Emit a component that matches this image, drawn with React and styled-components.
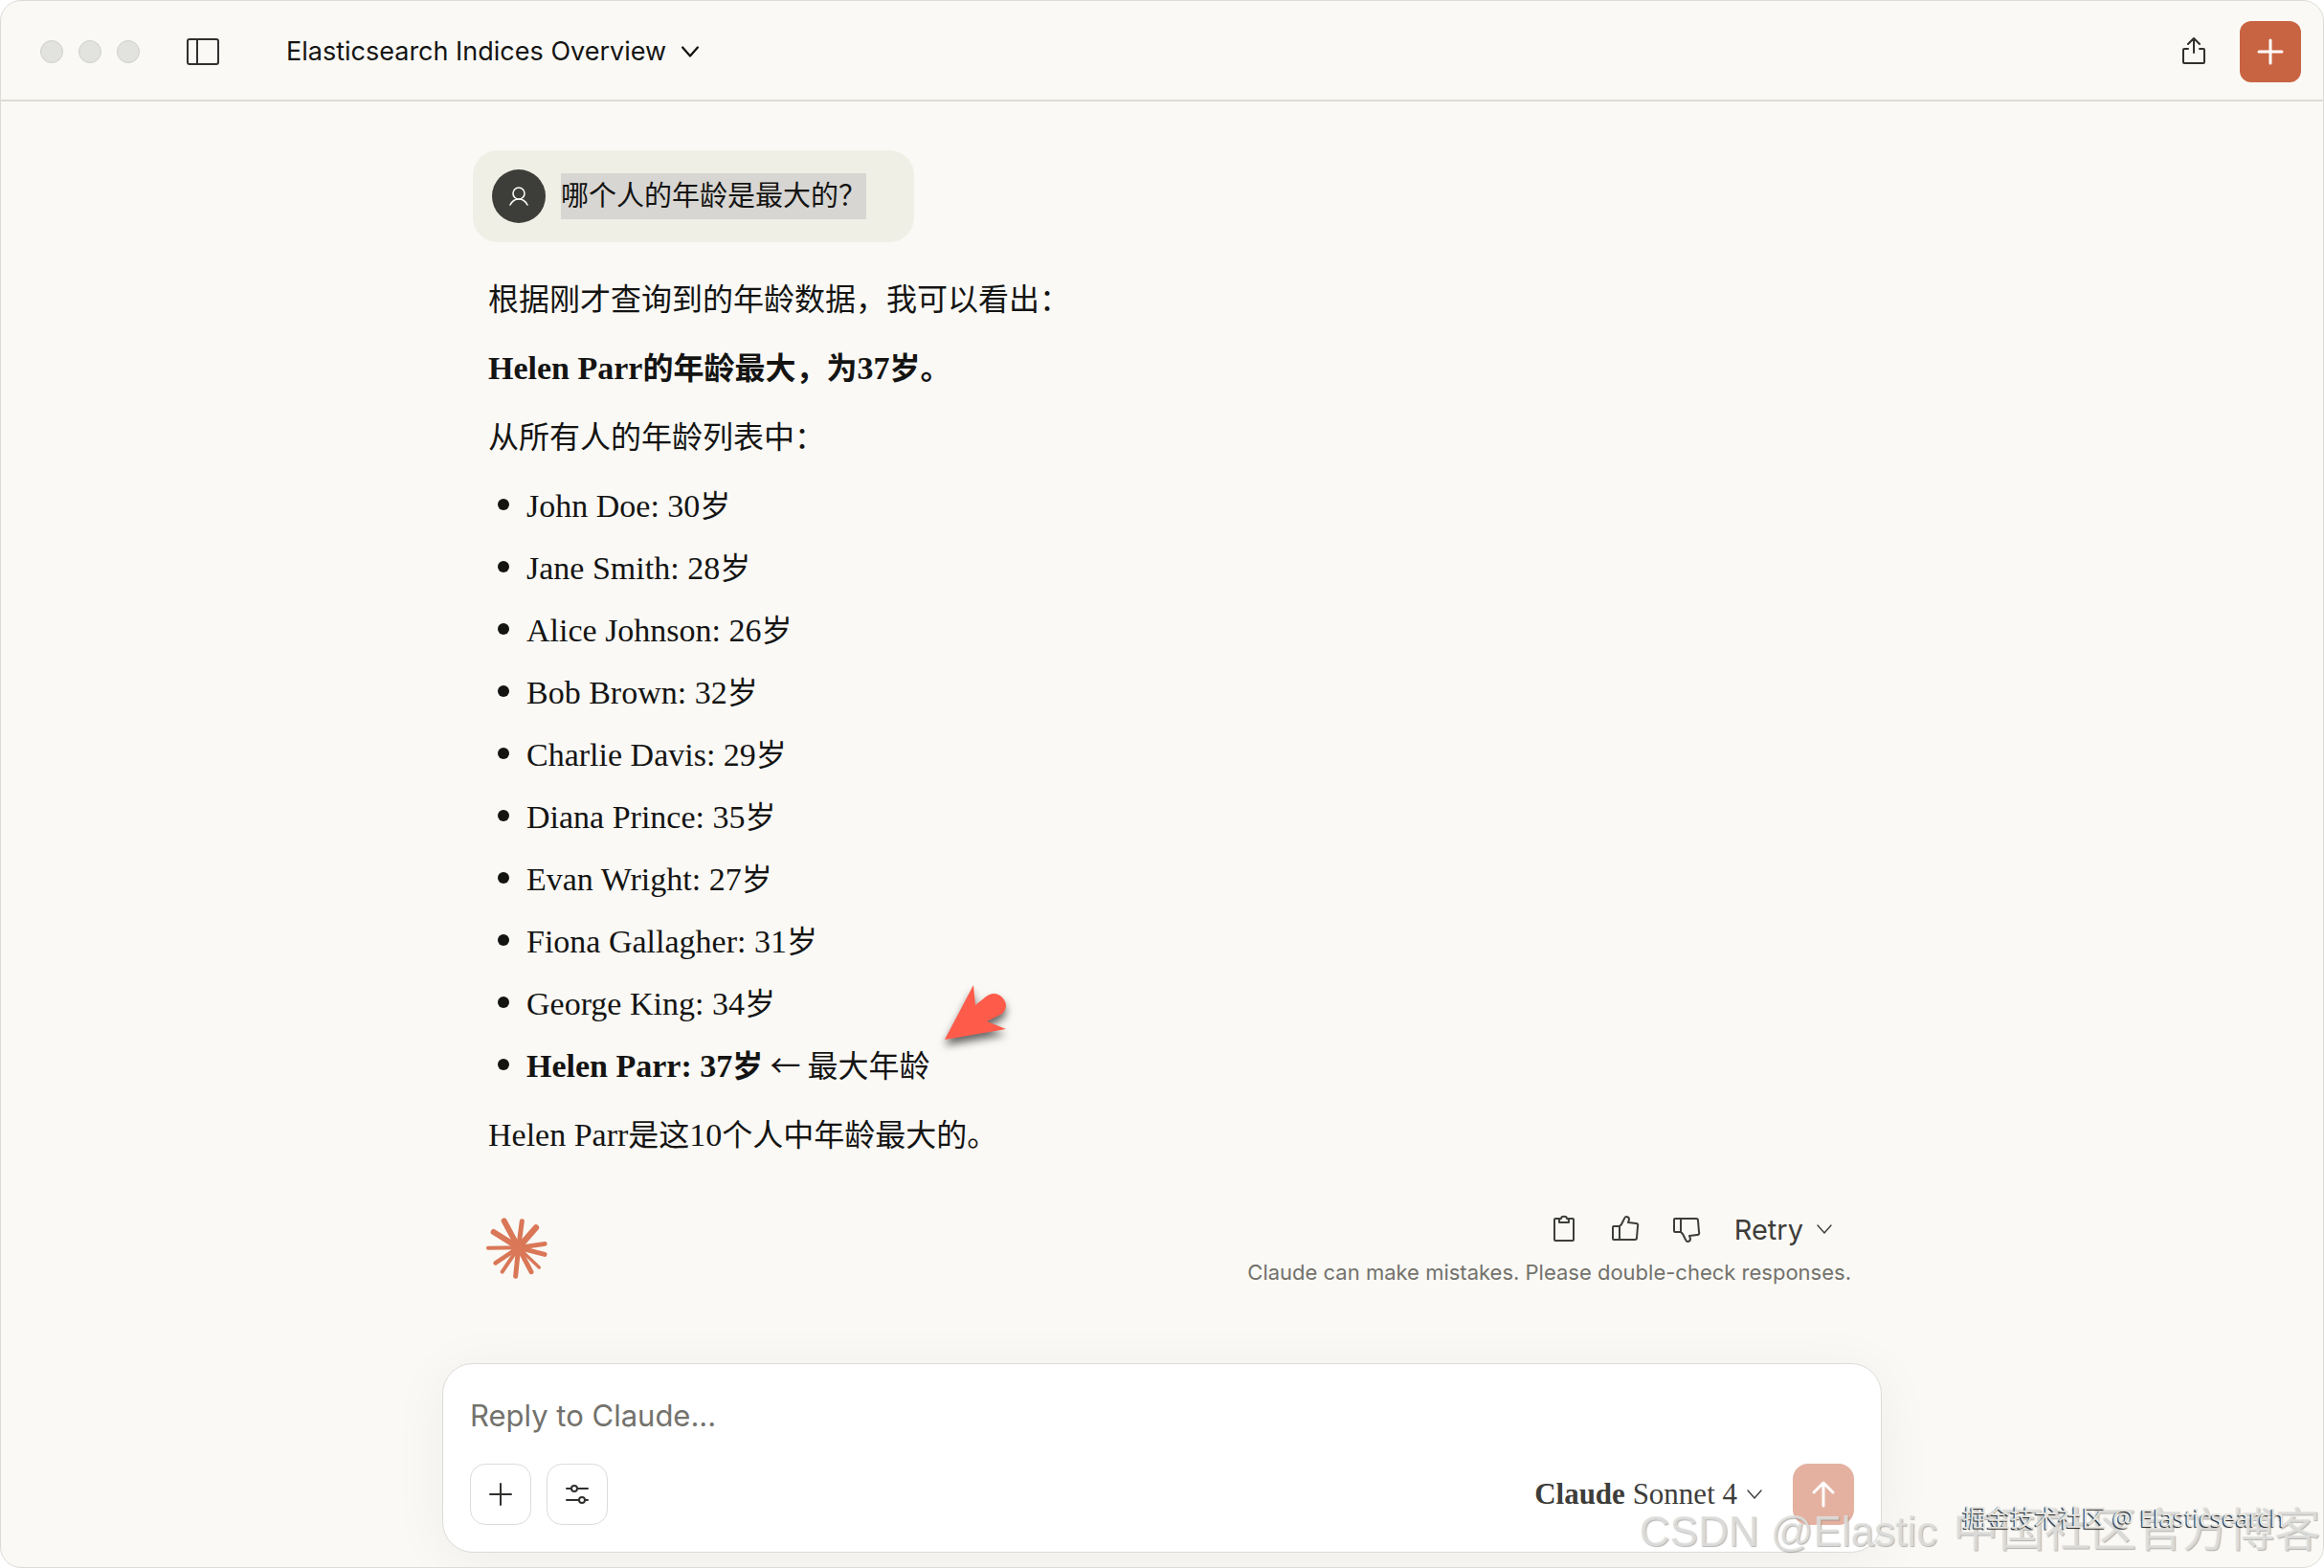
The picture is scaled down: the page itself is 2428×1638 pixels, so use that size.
import React, { useState } from "react";
import { createGlobalStyle, styled } from "styled-components";

const people = [
  { name: "John Doe", age: 30 },
  { name: "Jane Smith", age: 28 },
  { name: "Alice Johnson", age: 26 },
  { name: "Bob Brown", age: 32 },
  { name: "Charlie Davis", age: 29 },
  { name: "Diana Prince", age: 35 },
  { name: "Evan Wright", age: 27 },
  { name: "Fiona Gallagher", age: 31 },
  { name: "George King", age: 34 },
];

// tip x, tip y, thickness
const rays = [
  [80, 40, 18],
  [136, 41, 15],
  [180, 61, 19],
  [208, 112, 14],
  [207, 145, 15],
  [190, 186, 10],
  [165, 200, 15],
  [116, 214, 15],
  [74, 200, 12],
  [53, 172, 14],
  [30, 125, 12],
  [47, 75, 18],
];

function Caret({ size = 16, weight = 2 }) {
  return (
    <Icon viewBox="0 0 16 16" $w={size} $h={size} $weight={weight}>
      <path d="M1 4l7 8 7-8" />
    </Icon>
  );
}

function Burst() {
  return (
    <BurstIcon viewBox="24 30 192 192">
      {rays.map(([x, y, w]) => (
        <path key={`${x}-${y}`} d={`M125 124L${x} ${y}`} strokeWidth={w} />
      ))}
      <circle cx="126" cy="126" r="24" />
    </BurstIcon>
  );
}

function ThumbIcon({ down }) {
  return (
    <Icon viewBox="0 0 32 32" $w={32} $h={32}>
      <g transform={down ? "matrix(1 0 0 -1 0 32)" : undefined}>
        <path d="M10 13H4a1 1 0 0 0-1 1v12a1 1 0 0 0 1 1h22a2 2 0 0 0 2-2l1-12a2 2 0 0 0-2-3l-8-1 1-3c0-2-1-3-3-3-1 0-1 0-2 2l-3 6-2 2v14" />
      </g>
    </Icon>
  );
}

function Header() {
  return (
    <Toolbar>
      <Lights>
        <Light aria-label="Close" />
        <Light aria-label="Minimize" />
        <Light aria-label="Zoom" />
      </Lights>
      <PlainButton aria-label="Toggle sidebar">
        <Icon viewBox="0 0 34 28" $w={34} $h={28}>
          <rect x="1" y="1" width="32" height="26" rx="2" />
          <path d="M11 1v26" />
        </Icon>
      </PlainButton>
      <TitleButton>
        Elasticsearch Indices Overview
        <Caret size={18} />
      </TitleButton>
      <Spacer />
      <PlainButton aria-label="Share">
        <Icon viewBox="0 0 32 32" $w={32} $h={32}>
          <path d="M10 13H6a1 1 0 0 0-1 1v13a1 1 0 0 0 1 1h20a1 1 0 0 0 1-1V14a1 1 0 0 0-1-1h-4M16 17V2M10 8l6-6 6 6" />
        </Icon>
      </PlainButton>
      <NewChat aria-label="New chat">
        <Icon viewBox="0 0 28 28" $w={28} $h={28} $weight={3}>
          <path d="M14 2v24M2 14h24" />
        </Icon>
      </NewChat>
    </Toolbar>
  );
}

function Composer() {
  const [text, setText] = useState("");

  return (
    <ComposerBox onSubmit={(e) => e.preventDefault()}>
      <ReplyInput
        aria-label="Reply to Claude"
        placeholder="Reply to Claude..."
        value={text}
        onChange={(e) => setText(e.target.value)}
      />
      <ComposerBar>
        <ToolButton type="button" aria-label="Add content">
          <Icon viewBox="0 0 24 24" $w={24} $h={24}>
            <path d="M12 1v22M1 12h22" />
          </Icon>
        </ToolButton>
        <ToolButton type="button" aria-label="Tools">
          <Icon viewBox="0 0 32 32" $w={32} $h={32}>
            <path d="M5 10h4M17 10h10M5 22h12M25 22h2" />
            <circle cx="13" cy="10" r="3" />
            <circle cx="21" cy="22" r="3" />
          </Icon>
        </ToolButton>
        <Spacer />
        <ModelButton type="button">
          <span>
            <strong>Claude</strong> Sonnet 4
          </span>
          <Caret weight={1.4} />
        </ModelButton>
        <SendButton aria-label="Send message">
          <Icon viewBox="0 0 32 32" $w={32} $h={32} $weight={3}>
            <path d="M16 28V5M6 14L16 4l10 10" />
          </Icon>
        </SendButton>
      </ComposerBar>
    </ComposerBox>
  );
}

export default function App() {
  return (
    <>
      <GlobalStyle />
      <Window>
        <Header />
        <Main>
          <Conversation>
            <Question>
              <Avatar>
                <Icon viewBox="0 0 24 24" $w={24} $h={24} $weight={1.6}>
                  <circle cx="12" cy="9" r="6" />
                  <path d="M3 21c2-4 5-6 9-6s7 2 9 6" />
                </Icon>
              </Avatar>
              <Selected>哪个人的年龄是最大的？</Selected>
            </Question>
            <Answer>
              <p>根据刚才查询到的年龄数据，我可以看出：</p>
              <p>
                <strong>
                  <Latin>Helen Parr</Latin>的年龄最大，为<Latin>37</Latin>岁。
                </strong>
              </p>
              <p>从所有人的年龄列表中：</p>
              <ul>
                {people.map((person) => (
                  <li key={person.name}>
                    <span>
                      <Latin>
                        {person.name}: {person.age}
                      </Latin>
                      岁
                    </span>
                  </li>
                ))}
                <li>
                  <Marked>
                    <strong>
                      <Latin>Helen Parr: 37</Latin>岁
                    </strong>
                    {" ← 最大年龄"}
                    <Pointer viewBox="0 0 96 80" aria-hidden="true">
                      <path d="M15 66L45 9l2 21 10-8c7-6 14-5 19 1s3 12-1 16L59 47l20 8z" />
                    </Pointer>
                  </Marked>
                </li>
              </ul>
              <p>
                <Latin>Helen Parr</Latin>是这<Latin>10</Latin>个人中年龄最大的。
              </p>
            </Answer>
            <AnswerFooter>
              <BurstWrap>
                <Burst />
              </BurstWrap>
              <Feedback>
                <Actions>
                  <ActionButton aria-label="Copy">
                    <Icon viewBox="0 0 32 32" $w={32} $h={32}>
                      <path d="M11 5H7a1 1 0 0 0-1 1v21a1 1 0 0 0 1 1h18a1 1 0 0 0 1-1V6a1 1 0 0 0-1-1h-4" />
                      <path d="M11 9V7c0-1 1-2 2-2 0-3 6-3 6 0 1 0 2 1 2 2v2z" />
                    </Icon>
                  </ActionButton>
                  <ActionButton aria-label="Good response">
                    <ThumbIcon />
                  </ActionButton>
                  <ActionButton aria-label="Bad response">
                    <ThumbIcon down />
                  </ActionButton>
                  <RetryButton>
                    Retry
                    <Caret weight={1.4} />
                  </RetryButton>
                </Actions>
                <Disclaimer href="#">Claude can make mistakes. Please double-check responses.</Disclaimer>
              </Feedback>
            </AnswerFooter>
          </Conversation>
          <Composer />
        </Main>
        <BlogMark>
          <span>CSDN @Elastic</span>
          <b>中国社区官方博客</b>
        </BlogMark>
        <CommunityMark>掘金技术社区 @ Elasticsearch</CommunityMark>
      </Window>
    </>
  );
}

const GlobalStyle = createGlobalStyle`
* {
    box-sizing: border-box;
}
body {
    margin: 0;
    background: #ffffff;
    color: #141413;
    font-family: Inter, "Noto Sans CJK SC", sans-serif;
}
button {
    padding: 0;
    border: 0;
    background: none;
    color: inherit;
    font-family: inherit;
    cursor: pointer;
}
`;

const Icon = styled.svg`
display: block;
flex: none;
width: ${(p) => p.$w}px;
height: ${(p) => p.$h}px;
fill: none;
stroke: currentColor;
stroke-width: ${(p) => p.$weight || 2};
stroke-linecap: round;
stroke-linejoin: round;
`;

const BurstIcon = styled.svg`
display: block;
width: 64px;
height: 64px;
stroke: #d97757;
stroke-linecap: round;
circle {
    fill: #d97757;
    stroke: none;
}
`;

const Window = styled.div`
position: relative;
display: flex;
flex-direction: column;
min-height: 100vh;
overflow: hidden;
border: 1px solid #dcdbd7;
border-radius: 22px;
background: #faf9f5;
`;

const Toolbar = styled.header`
display: flex;
align-items: center;
height: 105px;
padding: 3px 23px 0 41px;
border-bottom: 2px solid #dddcd6;
`;

const Lights = styled.div`
display: flex;
gap: 16px;
margin-right: 49px;
`;

const Light = styled.button`
width: 24px;
height: 24px;
&& {
    border: 1px solid #cfcfcc;
    border-radius: 50%;
    background: #e2e2df;
}
`;

const PlainButton = styled.button`
display: flex;
color: #30302e;
`;

const TitleButton = styled.button`
display: flex;
align-items: center;
gap: 16px;
margin-left: 70px;
font-size: 27px;
line-height: 36px;
`;

const Spacer = styled.div`
flex: 1;
`;

const NewChat = styled.button`
display: flex;
align-items: center;
justify-content: center;
width: 64px;
height: 64px;
margin-left: 32px;
&& {
    border-radius: 12px;
    background: #c96442;
    color: #ffffff;
}
`;

const Main = styled.main`
flex: 1;
display: flex;
flex-direction: column;
align-items: center;
padding: 51px 24px 15px;
`;

const Conversation = styled.section`
flex: 1;
width: 100%;
max-width: 1440px;
padding-bottom: 48px;
`;

const Question = styled.div`
display: flex;
align-items: center;
gap: 16px;
width: fit-content;
padding: 20px 50px 20px 20px;
border-radius: 26px;
background: #efefe6;
`;

const Avatar = styled.div`
display: flex;
align-items: center;
justify-content: center;
width: 56px;
height: 56px;
border-radius: 50%;
background: #3d3d3a;
color: #faf9f5;
`;

const Selected = styled.span`
background: #d8d6d2;
font-size: 29px;
line-height: 48px;
`;

const Latin = styled.span`
font-family: "Liberation Serif", serif;
font-size: 34px;
line-height: 1;
white-space: pre;
`;

const Answer = styled.article`
padding: 33px 16px 0;
font-family: "Noto Sans CJK SC", sans-serif;
font-size: 32px;
line-height: 49px;
p {
    margin: 0 0 23px;
}
ul {
    display: flex;
    flex-direction: column;
    gap: 16px;
    margin: 0 0 23px;
    padding: 0;
    list-style: none;
}
li {
    display: flex;
    align-items: center;
    gap: 18px;
    padding-left: 10px;
    &::before {
        content: "";
        width: 12px;
        height: 12px;
        border-radius: 50%;
        background: #141413;
    }
}
`;

const Marked = styled.span`
position: relative;
`;

/* sits over the list, pointing at the oldest person */
const Pointer = styled.svg`
position: absolute;
left: 100%;
bottom: 36px;
width: 96px;
height: 80px;
fill: #ff5b4a;
filter: drop-shadow(0 6px 4px rgba(0, 0, 0, 0.6));
`;

const AnswerFooter = styled.div`
display: flex;
align-items: flex-start;
justify-content: space-between;
margin-top: 48px;
`;

const BurstWrap = styled.div`
padding: 16px 14px;
`;

const Feedback = styled.div`
display: flex;
flex-direction: column;
align-items: flex-end;
`;

const Actions = styled.div`
display: flex;
height: 56px;
color: #3d3d3a;
`;

const ActionButton = styled.button`
display: flex;
align-items: center;
justify-content: center;
width: 64px;
`;

const RetryButton = styled.button`
display: flex;
align-items: center;
gap: 14px;
font-size: 29px;
&& {
    padding: 0 20px 0 18px;
}
`;

const Disclaimer = styled.a`
color: #73726c;
font-size: 22px;
line-height: 34px;
text-decoration: none;
`;

const ComposerBox = styled.form`
display: flex;
flex-direction: column;
gap: 26px;
width: 100%;
max-width: 1504px;
padding: 28px;
border: 1px solid #dddcd8;
border-radius: 32px;
background: #ffffff;
box-shadow: 0 8px 60px rgba(0, 0, 0, 0.05);
`;

const ReplyInput = styled.input`
height: 50px;
padding: 0;
border: 0;
outline: 0;
background: transparent;
color: #141413;
font-family: inherit;
font-size: 31px;
&::placeholder {
    color: #73726c;
    opacity: 1;
}
`;

const ComposerBar = styled.div`
display: flex;
align-items: center;
gap: 16px;
`;

const ToolButton = styled.button`
display: flex;
align-items: center;
justify-content: center;
width: 64px;
height: 64px;
&& {
    border: 1px solid #dddcd8;
    border-radius: 16px;
    color: #30302e;
}
`;

const ModelButton = styled.button`
display: flex;
align-items: center;
gap: 10px;
margin-right: 16px;
&& {
    color: #3d3d3a;
    font-family: "Liberation Serif", serif;
    font-size: 31px;
}
`;

const SendButton = styled.button`
display: flex;
align-items: center;
justify-content: center;
width: 64px;
height: 64px;
&& {
    border-radius: 16px;
    background: #e4b1a0;
    color: #ffffff;
}
`;

/* watermarks lie over the bottom right corner of the window */
const BlogMark = styled.div`
position: absolute;
right: 3px;
bottom: 4px;
display: flex;
align-items: baseline;
gap: 16px;
color: rgba(226, 226, 224, 0.85);
font-family: "Liberation Sans", "Noto Sans CJK SC", sans-serif;
font-size: 44px;
line-height: 66px;
text-shadow: 1px 1px 1px rgba(130, 130, 130, 0.6);
pointer-events: none;
b {
    font-size: 48px;
    font-weight: 400;
}
`;

const CommunityMark = styled.div`
position: absolute;
right: 40px;
bottom: 34px;
color: #e6e5e1;
font-family: "Noto Sans", "Noto Sans CJK SC", sans-serif;
font-size: 25px;
line-height: 36px;
text-shadow: -1px 1px 1px #1c1c1c;
pointer-events: none;
`;
